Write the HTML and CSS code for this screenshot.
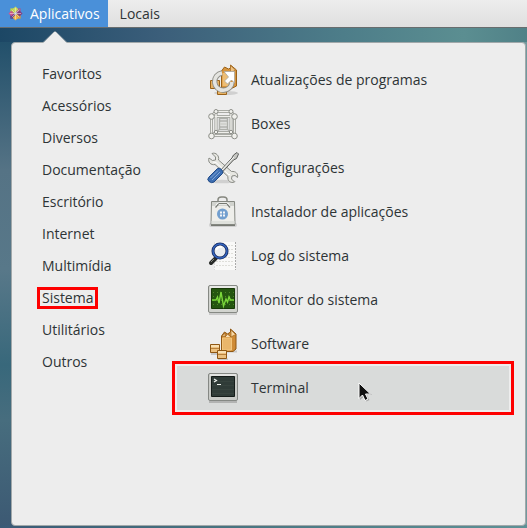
FILE: index.html
```html
<!DOCTYPE html>
<html lang="pt-BR">
<head>
<meta charset="utf-8">
<meta name="viewport" content="width=device-width, initial-scale=1">
<title>Aplicativos</title>
<link rel="stylesheet" href="styles.css">
</head>
<body>
<header class="panel">
  <button class="panel-button active" type="button" aria-expanded="true">
    <svg class="logo" viewBox="0 0 16 16" aria-hidden="true">
      <path d="M2.500 2.500h5v5h-5z" fill="#b8cf4a"/>
      <path d="M8.500 2.500h5v5h-5z" fill="#a05a94"/>
      <path d="M2.500 8.500h5v5h-5z" fill="#5b3a86"/>
      <path d="M8.500 8.500h5v5h-5z" fill="#d79a3d"/>
      <path d="M8 .5l3 3L8 7 5 3.500z" fill="#cbdc5c"/>
      <path d="M15.500 8l-3 3L9 8l3.500-3z" fill="#7d3a80"/>
      <path d="M8 15.500l-3-3L8 9l3 3.500z" fill="#efb649"/>
      <path d="M.5 8l3-3L7 8l-3.500 3z" fill="#c9548f"/>
      <path d="M4 4l8 8M12 4l-8 8M8 2v12M2 8h12" stroke="#f3ead7" stroke-width=".6" fill="none"/>
    </svg>
    Aplicativos
  </button>
  <button class="panel-button" type="button">Locais</button>
</header>
<main class="menu">
  <svg class="arrow" viewBox="0 0 24 13" aria-hidden="true">
    <path d="M0 12L11 1h2l11 11v1H0z" fill="#ededed"/>
    <path d="M0 11.500L11.500 .5h1L24 11.500" fill="none" stroke="#a5adb0" stroke-width=".7"/>
  </svg>
  <nav class="categories" aria-label="Categorias">
    <a href="#favoritos">Favoritos</a>
    <a href="#acessorios">Acessórios</a>
    <a href="#diversos">Diversos</a>
    <a href="#documentacao">Documentação</a>
    <a href="#escritorio">Escritório</a>
    <a href="#internet">Internet</a>
    <a href="#multimidia">Multimídia</a>
    <a href="#sistema"><span class="marked">Sistema</span></a>
    <a href="#utilitarios">Utilitários</a>
    <a href="#outros">Outros</a>
  </nav>
  <div class="apps">
    <button class="app" type="button">
      <svg viewBox="0 0 32 32" aria-hidden="true">
        <ellipse cx="19" cy="29" rx="12" ry="2" fill="#000" opacity=".12"/>
        <path d="M3.500 16.500h9v8h-9zM10.500 23.500h9v7h-9z" fill="#e7b365" stroke="#9b6218"/>
        <path d="M14.500 7l3-4 4 2 2-1V1l6 5v16l-4 2h-11z" fill="#d6943d" stroke="#9b6218"/>
        <path d="M15.500 9h8v13h-8z" fill="#edbd74"/>
        <path d="M23.500 1.500l5 4.500-5 3z" fill="#eec283" stroke="#a76f26" stroke-width=".7"/>
        <path d="M15 9a8.700 8.700 0 1 0 10 9" fill="none" stroke="#8f8f89" stroke-width="5.400"/>
        <path d="M15 9a8.700 8.700 0 1 0 10 9" fill="none" stroke="#e4e4e0" stroke-width="3.600"/>
        <path d="M17 7.500h10.500V19l-3-3-4 4-3-3 4-4z" fill="#fff" stroke="#a7a69f" stroke-width=".8"/>
      </svg>
      Atualizações de programas
    </button>
    <button class="app" type="button">
      <svg viewBox="0 0 32 32" aria-hidden="true">
        <g fill="none" stroke="#92948e" stroke-width="3">
          <path d="M9 3.500h15v21H9zM4.500 8.500h23v19h-23zM9 3.500l-4.500 5M24 3.500l3.500 5M9 24.500l-4.500 3M24 24.500l3.500 3"/>
        </g>
        <g fill="none" stroke="#efefeb" stroke-width="1.500">
          <path d="M9 3.500h15v21H9zM4.500 8.500h23v19h-23zM9 3.500l-4.500 5M24 3.500l3.500 5M9 24.500l-4.500 3M24 24.500l3.500 3"/>
        </g>
        <path d="M12.500 10.500h8v11h-8zM12.500 13h8M12.500 19h8M12.500 21.500l-4 3M20.500 21.500l4 3" fill="none" stroke="#adafaa" stroke-width="1.500"/>
        <path d="M13 16h7" stroke="#d1d2ce" stroke-width="3"/>
        <g fill="#f1f1ed" stroke="#8c8e88">
          <circle cx="9" cy="3.500" r="2"/><circle cx="24" cy="3.500" r="2"/>
          <circle cx="4.500" cy="8.500" r="2.800"/><circle cx="27.500" cy="8.500" r="2.800"/>
          <circle cx="4.500" cy="28" r="2.800"/><circle cx="27.500" cy="28" r="2.800"/>
          <circle cx="9" cy="24" r="1.700"/><circle cx="24" cy="24" r="1.700"/>
        </g>
      </svg>
      Boxes
    </button>
    <button class="app" type="button">
      <svg viewBox="0 0 32 32" aria-hidden="true">
        <ellipse cx="15" cy="29.500" rx="14" ry="1.800" fill="#000" opacity=".12"/>
        <path d="M5 1.500L8.500 5v3L5.500 8.500 2 6c-1.500 4 2 7.500 6 6.500l13 12c-1 4.500 3 7 6.500 5.500l-3-3 .500-3 3-.500 2.500 2c1-4-2-6.500-6-6L11.500 8c1-4-2.500-8-6.500-6.500z" fill="#e7e7e2" stroke="#888a84"/>
        <path d="M6 10l3 .500L22 23l1-1" fill="none" stroke="#fff"/>
        <path d="M12.500 19.500L25 6l1.500-3L30 .5l1.500 1.500-2 4.500-3 1.500-12 13z" fill="#c7c8c4" stroke="#5c5e5b"/>
        <path d="M14 19L27 5" stroke="#f8f8f6"/>
        <path d="M2 25l8.500-8.500q2-1 4 1t1 4L7 30q-2.500 1.500-5-.500t0-4.500z" fill="#3e6fb2" stroke="#204a87"/>
        <path d="M3.500 26l7.500-7.500M5 28l8-8" stroke="#80a6d8"/>
      </svg>
      Configurações
    </button>
    <button class="app" type="button">
      <svg viewBox="0 0 32 32" aria-hidden="true">
        <rect x="2" y="27" width="28" height="4" rx="2" fill="#000" opacity=".13"/>
        <path d="M11 7V4q0-3 3.500-3h2Q20 1 20 4v3" fill="none" stroke="#85877f" stroke-width="1.500"/>
        <path d="M4.500 5.500h23l.500 23H4z" fill="#eeeeea" stroke="#858881"/>
        <path d="M5 6h22v4H5z" fill="#d1d3ce"/>
        <path d="M4.500 25h23v3h-23z" fill="#dfe1dc"/>
        <path d="M4 29.500h24" stroke="#777a73"/>
        <path d="M9.500 11q0-3.500 3-3.500h6.500q3 0 3 3.500" fill="none" stroke="#fff" stroke-width="2"/>
        <path d="M8.500 11.500l3-3.500M23 11.500l-3-3.500M11.500 7.500h8.500" fill="none" stroke="#777a73" stroke-width="1.200"/>
        <circle cx="15.500" cy="18" r="5.500" fill="#729fcf"/>
        <path d="M13 15.500h2v2h-2zM16 15.500h2v2h-2zM13 18.500h2v2h-2zM16 18.500h2v2h-2z" fill="#f3f5f7"/>
      </svg>
      Instalador de aplicações
    </button>
    <button class="app" type="button">
      <svg viewBox="0 0 32 32" aria-hidden="true">
        <path d="M7 2h22v28H7z" fill="#f9f9f8"/>
        <path d="M28.500 2v28" stroke="#aaa" stroke-dasharray="2 1"/>
        <path d="M7.500 2v28" stroke="#ddd" stroke-dasharray="2 1"/>
        <path d="M9 5.500h17M9 9.500h17M9 13.500h17M9 17.500h17M9 21.500h17M9 25.500h17" stroke="#deded9" stroke-dasharray="2 1"/>
        <path d="M4 23l5-5" stroke="#292c29" stroke-width="4" stroke-linecap="round"/>
        <path d="M4 22l3-3" stroke="#848883"/>
        <circle cx="13" cy="11" r="7" fill="#e9edf1" stroke="#172a5e" stroke-width="3"/>
        <circle cx="13" cy="11" r="7" fill="none" stroke="#3465bf" stroke-width="1.400"/>
        <path d="M9 10q2-4 6-3" stroke="#fff" stroke-width="2" fill="none"/>
      </svg>
      Log do sistema
    </button>
    <button class="app" type="button">
      <svg viewBox="0 0 32 32" aria-hidden="true">
        <path d="M2 29h28v2H2z" fill="#000" opacity=".14"/>
        <rect x="1.500" y="1.500" width="29" height="27" rx="1.500" fill="#d2d4cf" stroke="#868984"/>
        <path d="M3 3h26" stroke="#fff"/>
        <path d="M4.500 4.500h23v20h-23z" fill="#245610" stroke="#173907"/>
        <path d="M6 8.500h21M6 12.500h21M6 16.500h21M6 20.500h21" stroke="#4d8628" stroke-dasharray="1 3"/>
        <path d="M5 16h4l1.500-3 1.500 6 2-11 2.500 14L19 15l1.500 3 1.500-5 1.500 3H27" fill="none" stroke="#7bd83b" stroke-width="1.400"/>
      </svg>
      Monitor do sistema
    </button>
    <button class="app" type="button">
      <svg viewBox="0 0 32 32" aria-hidden="true">
        <path d="M14 23.500h16M4 26h8M11 31.500h10" stroke="#000" stroke-width="2" opacity=".15"/>
        <path d="M14.500 8l3-4 3 2 3-2V1l5.500 5v15l-3 2.500H14.500z" fill="#cf8b36" stroke="#8f5713"/>
        <path d="M15.500 10h9v12h-9z" fill="#e9b66b" stroke="#f3c67d"/>
        <path d="M15 8.500l3-3.500v3.500zM24 2l4.500 4.500L24 9z" fill="#f6d7a4" stroke="#a56a22" stroke-width=".7"/>
        <path d="M18 9l2.500-3L24 9" fill="#f8dfb7" stroke="#a56a22"/>
        <path d="M3.500 16.500h9v8h-9zM10.500 22.500h9v8h-9z" fill="#ecc17f" stroke="#8f5713"/>
        <path d="M4 17h8v2H4zM11 23h8v2h-8z" fill="#f8dfb2"/>
        <path d="M4 20.500h8M11 26.500h8" stroke="#b9803b"/>
      </svg>
      Software
    </button>
    <button class="app selected" type="button">
      <svg viewBox="0 0 32 32" aria-hidden="true">
        <path d="M2 29h28v2H2z" fill="#000" opacity=".18"/>
        <rect x="1.500" y="1.500" width="29" height="27" rx="1.500" fill="#c9cbc7" stroke="#858884"/>
        <path d="M3 3h26" stroke="#fff"/>
        <path d="M4.500 4.500h23v20h-23z" fill="#303c38" stroke="#151c19"/>
        <path d="M5 9.500h22M5 13.500h22M5 17.500h22M5 21.500h22" stroke="#37433e"/>
        <path d="M7 7l2.500 1.500L7 10M10 12.500h4" fill="none" stroke="#eef2ee" stroke-width="1.200"/>
      </svg>
      Terminal
    </button>
  </div>
  <svg class="cursor" viewBox="0 0 14 21" aria-hidden="true">
    <path d="M2 2v16l4-3.500 2.500 5 3-1.500-2.500-5h5z" fill="#777" opacity=".5"/>
    <path d="M1 1v15.500l3.500-3.500 2.500 5.500 3-1.500-2.500-5h5z" fill="#111" stroke="#fff"/>
  </svg>
</main>
</body>
</html>
```
FILE: styles.css
```css
* {
  box-sizing: border-box;
}

body {
  margin: 0;
  min-height: 100vh;
  display: flex;
  flex-direction: column;
  font: 14px/20px "Open Sans", "Noto Sans", sans-serif;
  color: #2e3436;
  background:
    linear-gradient(90deg, #1c4765 0%, #3b5e7a 30%, #4d7d89 65%, #5b8e91 88%, #508187 100%) top / 100% 42px no-repeat,
    linear-gradient(90deg, #3a5a76, #47727f 40%, #5e9196) bottom / 100% 3px no-repeat,
    linear-gradient(90deg, transparent 50%, #71999d 50%),
    linear-gradient(#22506b 42px, #557385 170px, #587889 270px, #38687b 365px, #476d7e 420px, #3c5973 528px);
}

button {
  font: inherit;
  color: inherit;
  border: 0;
  background: none;
}

.panel {
  display: flex;
  height: 28px;
  background: linear-gradient(#ededed, #dfdfdf);
  border-bottom: 1px solid #686d6e;
}

.panel-button {
  display: flex;
  align-items: center;
  gap: 8px;
  padding: 0 12px;
}

.panel-button.active {
  padding: 0 8px;
  gap: 7px;
  color: #fff;
  background: #4a90d9;
}

.logo {
  width: 15px;
  height: 15px;
}

.menu {
  position: relative;
  flex: 1;
  display: grid;
  grid-template-columns: 165px 1fr;
  align-items: start;
  margin: 14px 1px 2px 11px;
  padding: 15px 16px 15px 0;
  background: #ededed;
  border: 1px solid #a1a8aa;
  border-radius: 4px;
}

.arrow {
  position: absolute;
  top: -12px;
  left: 31px;
  width: 24px;
  height: 13px;
}

.categories {
  display: flex;
  flex-direction: column;
  padding-left: 30px;
}

.categories a {
  height: 32px;
  display: flex;
  align-items: center;
  color: inherit;
  text-decoration: none;
}

.marked {
  margin: 0 -2px;
  padding: 0 2px;
  line-height: 16px;
  outline: 3px solid #fe0000;
}

.app {
  display: flex;
  align-items: center;
  gap: 12px;
  width: 100%;
  height: 44px;
  padding: 0 30px;
  text-align: left;
}

.app svg {
  flex: none;
  width: 32px;
  height: 32px;
}

.app.selected {
  background: #d9dbda;
  outline: 3px solid #fe0000;
  outline-offset: 2px;
}

.cursor {
  position: absolute;
  top: 339px;
  left: 346px;
  width: 14px;
  height: 21px;
}
```
